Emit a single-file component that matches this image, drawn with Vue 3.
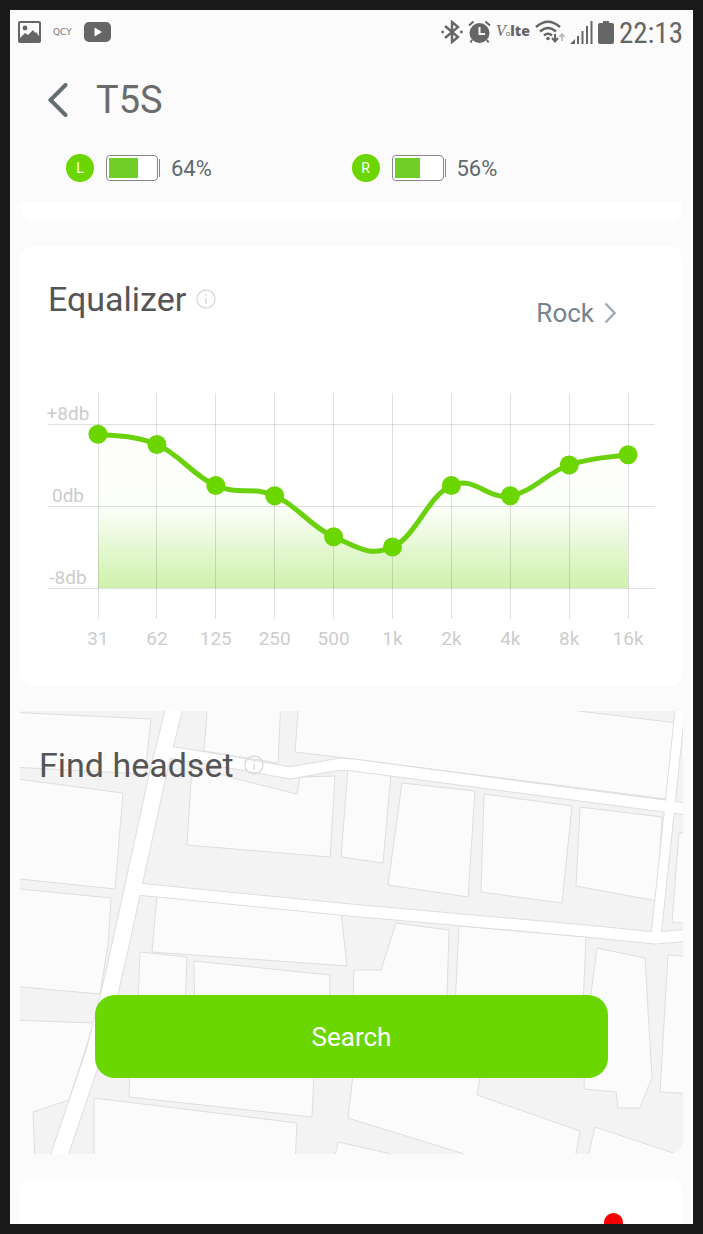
<template>
  <div class="phone">
    <header class="top">
      <div class="status-bar">
        <div class="status-left">
          <svg width="23" height="22" viewBox="0 0 23 22">
            <rect x="1" y="1" width="21" height="20" rx="1" fill="none" stroke="#666" stroke-width="2" />
            <circle cx="7" cy="7" r="2.4" fill="#666" />
            <path d="M2 17 L7 12 L10 14 L15 9 L17 12 L18 11 L21 15 V21 H2 Z" fill="#666" />
          </svg>
          <span class="brand">QCY</span>
          <svg width="27" height="20" viewBox="0 0 27 20">
            <rect width="27" height="20" rx="5" fill="#666" />
            <path d="M10.500 5.500 V14.500 L18 10 Z" fill="#fff" />
          </svg>
        </div>
        <div class="status-right">
          <svg class="bluetooth" width="22" height="24" viewBox="0 0 22 24">
            <path d="M4 6 L17 17 L11 22 V2 L17 7 L4 18" fill="none" stroke="#666" stroke-width="2.400" />
            <circle cx="1.600" cy="12" r="1.400" fill="#666" />
            <circle cx="20.400" cy="12" r="1.400" fill="#666" />
          </svg>
          <svg class="alarm" width="23" height="24" viewBox="0 0 23 24">
            <circle cx="11.500" cy="13" r="10" fill="#666" />
            <path d="M1 5.500 L5.500 1.500 M22 5.500 L17.500 1.500 M4 20 L2.500 22.500 M19 20 L20.500 22.500" stroke="#666" stroke-width="2" />
            <path d="M11.500 7 V14 H17" fill="none" stroke="#fff" stroke-width="2" />
          </svg>
          <span class="volte"><i>V</i><small>o</small><b>lte</b></span>
          <svg class="wifi" width="30" height="24" viewBox="0 0 30 24">
            <g fill="none" stroke="#666" stroke-width="2.400">
              <path d="M1 7 Q13 -3.500 25 7" />
              <path d="M5 11.500 Q13 4.500 21 11.500" />
              <path d="M9 15.500 Q13 12 17 15.500" />
            </g>
            <circle cx="13" cy="18.500" r="1.800" fill="#666" />
            <path d="M20 14 V21 M17 18 L20 21.500 L23 18" fill="none" stroke="#666" stroke-width="2" />
            <path d="M27 21 V14.500 M24.500 17 L27 14 L29.500 17" fill="none" stroke="#b5b5b5" stroke-width="1.500" />
          </svg>
          <svg class="signal" width="23" height="23" viewBox="0 0 23 23">
            <path d="M0 23 L5 18 V23 Z M7 15 h2 v8 h-2 Z M11.500 10 h2 v13 h-2 Z M16 5 h2 v18 h-2 Z M20.500 0 h2 v23 h-2 Z" fill="#666" />
          </svg>
          <svg class="power" width="16" height="23" viewBox="0 0 16 23">
            <path d="M5 0 H11 V2 H14 Q16 2 16 4 V21 Q16 23 14 23 H2 Q0 23 0 21 V4 Q0 2 2 2 H5 Z" fill="#666" />
          </svg>
          <span class="clock">22:13</span>
        </div>
      </div>

      <div class="title-row">
        <button type="button" class="back" aria-label="Back">
          <svg width="20" height="34" viewBox="0 0 20 34">
            <path d="M17.500 2 L2.500 17 L17.500 32" fill="none" stroke="#636e70" stroke-width="4" stroke-linecap="round" />
          </svg>
        </button>
        <h1>T5S</h1>
      </div>

      <div class="batteries">
        <div v-for="bud in buds" :key="bud.side" class="bud">
          <span class="side">{{ bud.side }}</span>
          <span class="battery"><span class="level" :style="{ width: bud.level + '%' }"></span></span>
          <span class="percent">{{ bud.level }}%</span>
        </div>
      </div>
    </header>

    <main class="content">
      <div class="card card-end"></div>

      <section class="card">
        <div class="card-header">
          <h2>
            Equalizer
            <svg class="info" width="20" height="20" viewBox="0 0 20 20">
              <circle cx="10" cy="10" r="9" />
              <path d="M10 9 V15 M10 5 V7" />
            </svg>
          </h2>
          <a href="#" class="preset">
            Rock
            <svg width="12" height="22" viewBox="0 0 12 22">
              <path d="M1.500 1.500 L10.500 11 L1.500 20.500" fill="none" stroke="#a0aab2" stroke-width="2.400" />
            </svg>
          </a>
        </div>

        <svg class="chart" viewBox="0 0 663 280">
          <defs>
            <linearGradient id="area" gradientUnits="userSpaceOnUse" x1="0" y1="44" x2="0" y2="208">
              <stop offset="0" stop-color="#6bd600" stop-opacity="0.01" />
              <stop offset="0.500" stop-color="#6bd600" stop-opacity="0.020" />
              <stop offset="1" stop-color="#6bd600" stop-opacity="0.330" />
            </linearGradient>
          </defs>
          <path :d="areaPath" fill="url(#area)" />
          <g class="grid">
            <line v-for="row in rows" :key="row.label" x1="28" x2="635" :y1="row.y" :y2="row.y" />
            <line v-for="p in points" :key="p.label" :x1="p.x" :x2="p.x" y1="13" y2="239" />
          </g>
          <text v-for="row in rows" :key="row.label" x="48" :y="row.y - 4">{{ row.label }}</text>
          <text v-for="p in points" :key="p.label" :x="p.x" y="265">{{ p.label }}</text>
          <path :d="linePath" fill="none" stroke="#6bd10c" stroke-width="5" />
          <circle v-for="p in points" :key="p.label" :cx="p.x" :cy="p.y" r="9.500" fill="#6bd600" />
        </svg>
      </section>

      <section class="finder">
        <svg class="map" viewBox="20 711 663 443" preserveAspectRatio="xMidYMid slice">
          <rect x="20" y="711" width="664" height="444" fill="#f3f3f3" />
          <polygon v-for="block in blocks" :key="block" :points="block" fill="#fbfbfb" stroke="#dedede" />
          <polyline v-for="road in roads" :key="road.line" :points="road.line" :stroke-width="road.width + 2" class="road-edge" />
          <polyline v-for="road in roads" :key="road.line" :points="road.line" :stroke-width="road.width" class="road" />
        </svg>
        <h2>
          Find headset
          <svg class="info" width="20" height="20" viewBox="0 0 20 20">
            <circle cx="10" cy="10" r="9" />
            <path d="M10 9 V15 M10 5 V7" />
          </svg>
        </h2>
        <button type="button" class="search">Search</button>
      </section>

      <section class="card card-next">
        <span class="dot"></span>
      </section>
    </main>
  </div>
</template>

<script setup>
import { computed } from 'vue'

const buds = [
  { side: 'L', level: 64 },
  { side: 'R', level: 56 }
]

const bands = [
  ['31', 7], ['62', 6], ['125', 2], ['250', 1], ['500', -3],
  ['1k', -4], ['2k', 2], ['4k', 1], ['8k', 4], ['16k', 5]
]

const dbToY = (db) => 126 - db * 10.25

const rows = [
  { label: '+8db', y: dbToY(8) },
  { label: '0db', y: dbToY(0) },
  { label: '-8db', y: dbToY(-8) }
]

const points = bands.map(([label, db], i) => ({ label, x: 78 + i * 58.9, y: dbToY(db) }))

// Smooth curve, control points follow the neighbours
const linePath = computed(() => {
  const k = 0.2
  let d = `M${points[0].x} ${points[0].y}`
  for (let i = 1; i < points.length; i++) {
    const a = points[i - 1]
    const b = points[i]
    const before = points[i - 2] || a
    const after = points[i + 1] || b
    d += ` C${a.x + (b.x - before.x) * k} ${a.y + (b.y - before.y) * k}`
    d += ` ${b.x - (after.x - a.x) * k} ${b.y - (after.y - a.y) * k} ${b.x} ${b.y}`
  }
  return d
})

const areaPath = computed(() => `${linePath.value} V${dbToY(-8)} H${points[0].x} Z`)

const blocks = [
  '10,712 27,713 151,719 145,774 10,767',
  '10,778 123,793 115,889 10,878',
  '10,888 111,898 108,945 100,994 10,986',
  '10,1020 94,1023 69,1100 33,1112 35,1165 10,1165',
  '208,700 281,700 278,763 204,751',
  '299,700 500,700 587,712 677,723 666,799 353,759 295,752',
  '192,765 233,778 297,794 300,777 335,776 330,857 187,845',
  '348,768 391,774 383,863 341,857',
  '402,783 475,791 468,897 388,885',
  '484,794 572,806 562,903 481,892',
  '580,807 662,817 657,901 576,886',
  '679,833 694,833 694,925 672,922',
  '157,894 341,912 347,966 152,952',
  '140,952 187,957 184,1030 137,1030',
  '194,961 330,975 329,1030 195,1030',
  '354,970 381,970 396,923 449,930 446,1030 352,1030',
  '459,926 586,937 582,1030 454,1030',
  '131,1050 315,1050 312,1117 129,1097',
  '94,1098 297,1123 295,1165 94,1165',
  '356,1050 485,1050 477,1095 580,1131 574,1165 500,1165 348,1118',
  '338,1142 387,1153 420,1165 333,1165',
  '595,1127 673,1153 700,1165 586,1165',
  '597,948 645,958 652,1077 640,1108 618,1108 616,1092 584,1089 585,1040',
  '668,955 694,957 694,1094 660,1092'
]

const roads = [
  { width: 16, line: '176,701 157,778 138,865 116,965 109,995 95,1050 56,1165' },
  { width: 11, line: '168,752 230,762 290,773 340,764 353,765 664,806 694,810' },
  { width: 11, line: '137,889 350,910 586,931 655,938 694,935' },
  { width: 9, line: '681,701 670,805 656,936' }
]
</script>

<style>
body { margin: 0; }
</style>

<style scoped>
.phone { box-sizing: border-box; height: 100vh; overflow: hidden; display: flex; flex-direction: column; border: 10px solid #1a1a1a; background: #fbfbfb; font-family: Roboto, "Liberation Sans", sans-serif; color: #555; }
h1, h2 { margin: 0; font-weight: 400; }
svg { display: block; flex-shrink: 0; }

.status-bar { height: 44px; padding: 0 10px 0 8px; display: flex; align-items: center; justify-content: space-between; }
.status-left { display: flex; align-items: center; gap: 12px; }
.status-right { display: flex; align-items: center; gap: 5px; }
.brand { font: 9px "DejaVu Sans", sans-serif; color: #777; }
.volte { display: flex; align-items: baseline; color: #666; line-height: 20px; font-size: 14px; }
.volte i { font-family: "Liberation Serif", serif; font-size: 16px; }
.volte small { font-size: 8px; }
.volte b { font-family: "Open Sans", sans-serif; font-weight: 800; }
.clock { font-family: "Roboto Condensed", "Liberation Sans Narrow", Roboto, sans-serif; font-size: 29px; line-height: 32px; padding-top: 2px; color: #666; }

.title-row { height: 92px; padding-left: 38px; display: flex; align-items: center; gap: 28px; }
.title-row h1 { font-size: 38px; line-height: 44px; color: #6b6b6b; }
.back { padding: 0; border: 0; background: none; cursor: pointer; }

.batteries { display: grid; grid-template-columns: 1fr 1fr; padding: 0 56px 12px; height: 44px; }
.bud { display: flex; align-items: center; }
.side { width: 28px; line-height: 28px; border-radius: 50%; background: #6bd600; color: #fff; font-size: 14px; text-align: center; }
.battery { position: relative; box-sizing: border-box; width: 52px; height: 26px; margin: 0 13px 0 12px; padding: 2px; border: 1px solid #888; border-radius: 4px; background: #fff; }
.battery::after { content: ""; position: absolute; top: 3px; right: -3px; width: 1px; height: 18px; background: #888; }
.level { display: block; height: 100%; background: #6fcf26; }
.percent { padding-top: 2px; font-size: 22px; line-height: 28px; color: #5f686c; }

.content { flex: 1; min-height: 0; padding: 0 10px; display: flex; flex-direction: column; gap: 25px; }
.card { flex-shrink: 0; border-radius: 14px; background: #fff; padding-bottom: 26px; }
.card-end { height: 19px; padding: 0; border-radius: 0 0 14px 14px; }
.card-header { display: flex; align-items: flex-start; justify-content: space-between; padding: 33px 67px 0 28px; }
h2 { display: flex; align-items: center; gap: 10px; font-size: 34px; line-height: 40px; }
.info { fill: none; stroke: #dcdcdc; stroke-width: 1.5; }
.preset { display: flex; align-items: center; gap: 10px; margin-top: 14px; font-size: 26px; line-height: 40px; color: #75838e; text-decoration: none; }

.chart { width: 100%; margin-top: 47px; }
.chart text { font-size: 19px; fill: #ccc; text-anchor: middle; }
.grid line { stroke: #000; stroke-opacity: 0.12; shape-rendering: crispEdges; }

.finder { position: relative; flex-shrink: 0; padding: 34px 75px 76px; }
.finder h2 { position: relative; margin-left: -56px; }
.map { position: absolute; inset: 0; width: 100%; height: 100%; border-radius: 0 0 14px 14px; }
.road { fill: none; stroke: #fff; }
.road-edge { fill: none; stroke: #dedede; }
.search { position: relative; display: block; width: 100%; height: 83px; margin-top: 210px; padding: 0; border: 0; border-radius: 20px; background: #6bd600; color: #fff; font: 26px Roboto, sans-serif; cursor: pointer; }

.card-next { flex: 1 0 auto; display: flex; justify-content: flex-end; align-items: flex-start; padding: 34px 60px 0 0; border-radius: 14px 14px 0 0; }
.dot { width: 19px; height: 19px; border-radius: 50%; background: #f40000; }
</style>
